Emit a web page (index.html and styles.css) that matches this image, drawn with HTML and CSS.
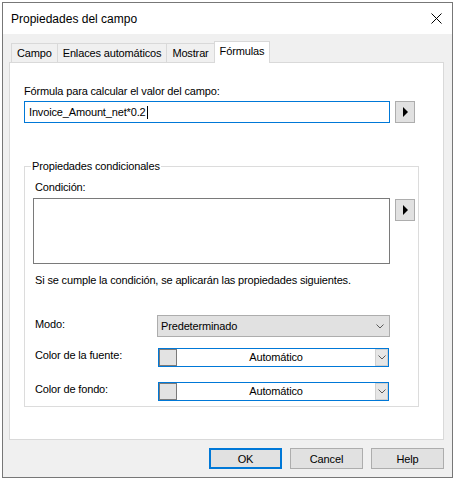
FILE: index.html
```html
<!DOCTYPE html>
<html lang="es">
<head>
  <meta charset="UTF-8">
  <title>Propiedades del campo</title>
  <link rel="stylesheet" href="styles.css">
</head>
<body>
  <div class="window">
    <div class="titlebar">
      <span class="title">Propiedades del campo</span>
      <svg class="close" width="11" height="11" viewBox="0 0 11 11">
        <path d="M0.5 0.5 L10.5 10.5 M10.5 0.5 L0.5 10.5" stroke="#000" stroke-width="1" fill="none"/>
      </svg>
    </div>

    <div class="dialog">
      <div class="tabs">
        <div class="tab">Campo</div>
        <div class="tab">Enlaces automáticos</div>
        <div class="tab">Mostrar</div>
        <div class="tab active">Fórmulas</div>
      </div>

      <div class="panel">
        <label class="field-label">Fórmula para calcular el valor del campo:</label>
        <div class="row">
          <div class="textbox">Invoice_Amount_net*0.2<span class="caret"></span></div>
          <button class="arrow-btn">
            <svg width="5" height="10" viewBox="0 0 5 10"><polygon points="0,0 5,5 0,10" fill="#000"/></svg>
          </button>
        </div>

        <fieldset class="group">
          <legend>Propiedades condicionales</legend>
          <div class="group-label">Condición:</div>
          <div class="row">
            <div class="textarea"></div>
            <button class="arrow-btn shifted">
              <svg width="5" height="10" viewBox="0 0 5 10"><polygon points="0,0 5,5 0,10" fill="#000"/></svg>
            </button>
          </div>
          <p class="hint">Si se cumple la condición, se aplicarán las propiedades siguientes.</p>

          <div class="prop-row mode-row">
            <span class="prop-label">Modo:</span>
            <div class="select">
              <span>Predeterminado</span>
              <svg class="chevron" width="8" height="5" viewBox="0 0 8 5"><path d="M0.5 0.5 L4 4 L7.5 0.5" stroke="#5a5a5a" fill="none"/></svg>
            </div>
          </div>

          <div class="prop-row font-row">
            <span class="prop-label">Color de la fuente:</span>
            <div class="color-combo">
              <span class="swatch"></span>
              <span class="combo-text">Automático</span>
              <span class="combo-btn">
                <svg class="chevron" width="8" height="5" viewBox="0 0 8 5"><path d="M0.5 0.5 L4 4 L7.5 0.5" stroke="#5a5a5a" fill="none"/></svg>
              </span>
            </div>
          </div>

          <div class="prop-row back-row">
            <span class="prop-label">Color de fondo:</span>
            <div class="color-combo">
              <span class="swatch"></span>
              <span class="combo-text">Automático</span>
              <span class="combo-btn">
                <svg class="chevron" width="8" height="5" viewBox="0 0 8 5"><path d="M0.5 0.5 L4 4 L7.5 0.5" stroke="#5a5a5a" fill="none"/></svg>
              </span>
            </div>
          </div>
        </fieldset>
      </div>

      <div class="buttons">
        <button class="btn default">OK</button>
        <button class="btn">Cancel</button>
        <button class="btn">Help</button>
      </div>
    </div>
  </div>
</body>
</html>
```

FILE: styles.css
```css
body {
  margin: 0;
  background: #fff;
  font-family: "Liberation Sans", Arial, sans-serif;
  font-size: 11px;
  letter-spacing: -0.15px;
  color: #000;
}
.window {
  margin: 2px 0 0 2px;
  width: 449px;
  height: 474px;
  border: 1px solid #777;
  display: flex;
  flex-direction: column;
}
.titlebar {
  height: 31px;
  flex: none;
  background: #fff;
  display: flex;
  align-items: center;
  justify-content: space-between;
  padding: 0 10px 0 8px;
}
.title {
  font-size: 12px;
  letter-spacing: 0;
}
.close {
  display: block;
}
.dialog {
  flex: 1;
  background: #f0f0f0;
  padding: 7px 8px 0 6px;
  display: flex;
  flex-direction: column;
}

/* tab strip */
.tabs {
  height: 21px;
  flex: none;
  display: flex;
  align-items: flex-end;
  padding-left: 2px;
}
.tab {
  height: 18px;
  line-height: 18px;
  padding: 0 5px;
  border: 1px solid #d9d9d9;
  border-bottom: none;
  margin-left: -1px;
  background: #f0f0f0;
}
.tab:first-child {
  margin-left: 0;
}
.tab.active {
  height: 21px;
  line-height: 19px;
  margin-bottom: -1px;
  background: #fff;
  position: relative;
  z-index: 1;
}
.panel {
  height: 378px;
  flex: none;
  box-sizing: border-box;
  background: #fff;
  border: 1px solid #d9d9d9;
  padding: 21px 0 0 14px;
}
.field-label {
  display: block;
  line-height: 15px;
  margin-bottom: 2px;
}
.row {
  display: flex;
  align-items: flex-start;
  gap: 5px;
}
.textbox {
  width: 366px;
  height: 22px;
  box-sizing: border-box;
  border: 1px solid #0078d7;
  padding-left: 4px;
  line-height: 20px;
  display: flex;
  align-items: center;
}
.caret {
  display: inline-block;
  width: 1px;
  height: 13px;
  margin-left: 1px;
  background: #000;
}
.arrow-btn {
  width: 20px;
  height: 22px;
  box-sizing: border-box;
  border: 1px solid #adadad;
  background: #e1e1e1;
  padding: 0;
  display: flex;
  align-items: center;
  justify-content: center;
}
.arrow-btn svg {
  display: block;
}
.arrow-btn.shifted {
  margin-top: 1px;
}

/* conditional properties group */
.group {
  width: 395px;
  box-sizing: border-box;
  margin: 36px 0 0 0;
  padding: 6px 3px 5px 8px;
  border: 1px solid #dcdcdc;
  min-inline-size: auto;
}
.group legend {
  padding: 0 1px;
  margin-left: -2px;
  line-height: 15px;
}
.group-label {
  line-height: 15px;
  padding-left: 2px;
  margin-bottom: 3px;
}
.textarea {
  width: 357px;
  height: 66px;
  box-sizing: border-box;
  border: 1px solid #7a7a7a;
  background: #fff;
}
.hint {
  margin: 9px 0 0 0;
  padding-left: 2px;
  line-height: 15px;
}
.prop-row {
  display: flex;
  align-items: center;
}
.mode-row {
  margin-top: 27px;
}
.font-row {
  margin-top: 11px;
}
.back-row {
  margin-top: 15px;
}
.prop-label {
  width: 122px;
  padding-left: 2px;
  line-height: 15px;
  margin-bottom: 4px;
}
.select {
  width: 233px;
  height: 22px;
  box-sizing: border-box;
  border: 1px solid #adadad;
  background: #e1e1e1;
  display: flex;
  align-items: center;
  justify-content: space-between;
  padding: 0 5px 0 3px;
}
.chevron {
  display: block;
}
.color-combo {
  width: 231px;
  height: 19px;
  box-sizing: border-box;
  margin-left: 1px;
  border: 1px solid #0078d7;
  background: #fff;
  display: flex;
}
.swatch {
  width: 18px;
  box-sizing: border-box;
  border: 1px solid #7a7a7a;
  background: #e3e3e3;
}
.combo-text {
  flex: 1;
  text-align: center;
  line-height: 17px;
}
.combo-btn {
  width: 13px;
  box-sizing: border-box;
  border: 1px solid #d0d0d0;
  background: #e6e6e6;
  display: flex;
  align-items: center;
  justify-content: center;
}

/* dialog buttons */
.buttons {
  margin-top: 8px;
  display: flex;
  justify-content: flex-end;
  gap: 8px;
}
.btn {
  width: 73px;
  height: 21px;
  box-sizing: border-box;
  border: 1px solid #adadad;
  background: #e1e1e1;
  font-family: inherit;
  font-size: 11px;
  letter-spacing: -0.15px;
  color: #000;
  padding: 0;
}
.btn.default {
  border: 2px solid #0078d7;
}
```
